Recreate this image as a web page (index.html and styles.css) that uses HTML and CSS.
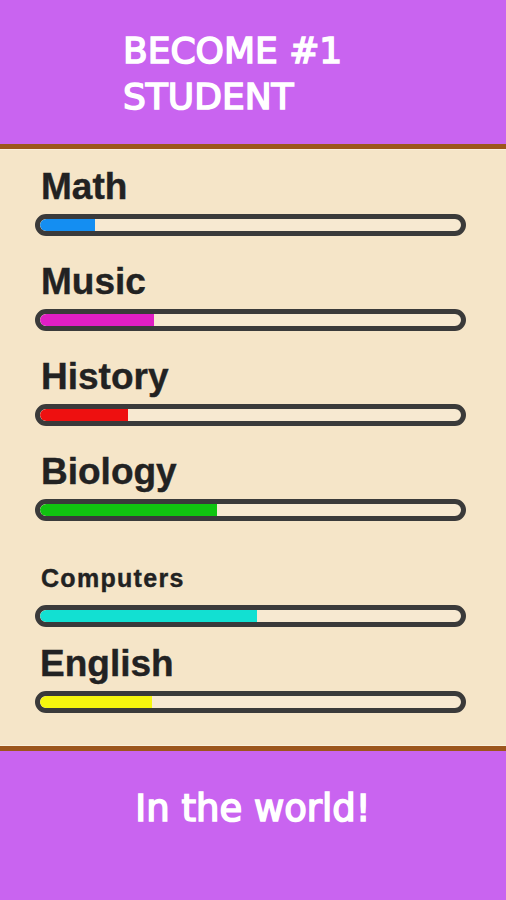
FILE: index.html
```html
<!DOCTYPE html>
<html lang="en">
<head>
    <meta charset="UTF-8">
    <meta name="viewport" content="width=device-width, initial-scale=1.0">
    <title>Become #1 Student</title>
    <link rel="stylesheet" href="styles.css">
</head>
<body>
    <header class="top">
        <h1>BECOME #1<br>STUDENT</h1>
    </header>
    <main class="board">
        <div class="skill">
            <p class="label">Math</p>
            <div class="bar"><div class="fill blue" style="width: 13%"></div></div>
        </div>
        <div class="skill">
            <p class="label">Music</p>
            <div class="bar"><div class="fill pink" style="width: 27%"></div></div>
        </div>
        <div class="skill">
            <p class="label">History</p>
            <div class="bar"><div class="fill red" style="width: 21%"></div></div>
        </div>
        <div class="skill">
            <p class="label">Biology</p>
            <div class="bar"><div class="fill green" style="width: 42%"></div></div>
        </div>
        <div class="skill small">
            <p class="label">Computers</p>
            <div class="bar"><div class="fill cyan" style="width: 51.5%"></div></div>
        </div>
        <div class="skill last">
            <p class="label">English</p>
            <div class="bar"><div class="fill yellow" style="width: 26.5%"></div></div>
        </div>
    </main>
    <footer class="bottom">
        <p>In the world!</p>
    </footer>
</body>
</html>
```

FILE: styles.css
```css
body {
    margin: 0;
    background-color: #c964f0;
    font-family: "Liberation Sans", Arial, sans-serif;
}
.top {
    height: 144px;
    box-sizing: border-box;
    padding: 28px 0 0 123px;
}
.top h1,
.bottom p {
    margin: 0;
    font-family: "Comic Sans MS", "DejaVu Sans", sans-serif;
    font-weight: normal;
    color: #fff;
    -webkit-text-stroke: 1.6px #fff;
}
.top h1 {
    font-size: 36px;
    line-height: 46px;
}
.board {
    background-color: #f5e5c8;
    border-top: 5px solid #9c561c;
    border-bottom: 5px solid #9c561c;
    box-shadow: inset 0 1px 0 #fbf0dc, inset 0 -1px 0 #fbf0dc;
    padding: 17px 40px 33px 35px;
}
.skill {
    margin-bottom: 25px;
}
.skill.small {
    padding-top: 11px;
    margin-bottom: 16px;
}
.skill.last {
    margin-bottom: 0;
}
.label {
    margin: 0 0 6px 6px;
    font-size: 37px;
    line-height: 42px;
    font-weight: bold;
    color: #222;
    -webkit-text-stroke: 0.4px #222;
}
.small .label {
    font-size: 25px;
    letter-spacing: 1.3px;
}
.last .label {
    margin-left: 5px;
}
.bar {
    height: 12px;
    border: 5px solid #3a3a3a;
    border-radius: 11px;
    background-color: #f7e9d1;
    overflow: hidden;
}
.fill {
    height: 100%;
    border-radius: 6px 0 0 6px;
}
.blue { background-color: #148ef2; }
.pink { background-color: #e01ec4; }
.red { background-color: #ee1010; }
.green { background-color: #10c410; }
.cyan { background-color: #12e0d2; }
.yellow { background-color: #f6f60e; }
.bottom {
    padding-top: 37px;
    height: 112px;
    text-align: center;
}
.bottom p {
    font-size: 37px;
    line-height: 42px;
}
```
